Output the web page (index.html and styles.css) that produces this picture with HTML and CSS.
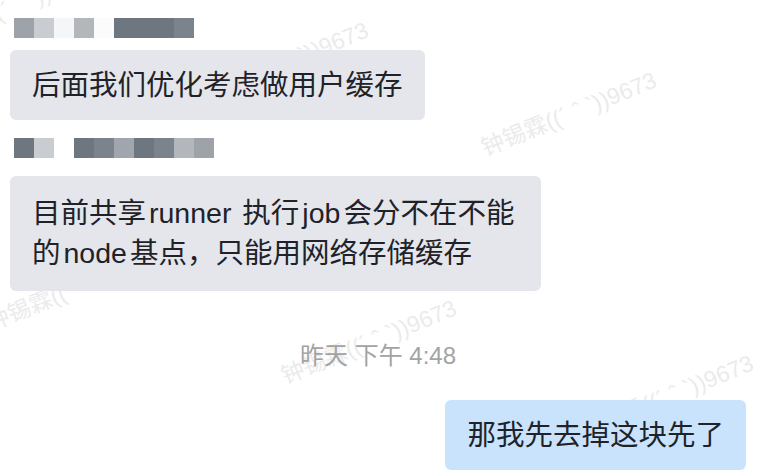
FILE: index.html
```html
<!DOCTYPE html>
<html lang="zh-CN">
<head>
  <meta charset="UTF-8">
  <meta name="viewport" content="width=device-width, initial-scale=1.0">
  <title>聊天记录</title>
  <link rel="stylesheet" href="styles.css">
</head>
<body>
  <div id="chat">
    <!-- 水印层 -->
    <div class="watermarks">
      <span class="wm" style="left: 10px; top: 6px;">钟锡霖((´ ˆ `))9673</span>
      <span class="wm" style="left: 280px; top: 62px;">钟锡霖((´ ˆ `))9673</span>
      <span class="wm" style="left: 568px; top: 112px;">钟锡霖((´ ˆ `))9673</span>
      <span class="wm" style="left: 862px; top: 165px;">钟锡霖((´ ˆ `))9673</span>
      <span class="wm" style="left: 73px; top: 287px;">钟锡霖((´ ˆ `))9673</span>
      <span class="wm" style="left: 368px; top: 340px;">钟锡霖((´ ˆ `))9673</span>
      <span class="wm" style="left: 665px; top: 395px;">钟锡霖((´ ˆ `))9673</span>
    </div>

    <div class="thread">
      <div class="sender">
        <i class="px c2"></i><i class="px c5"></i><i class="px c7"></i><i class="px c4"></i><i class="px c8"></i>
        <i class="px c1"></i><i class="px c1"></i><i class="px c1"></i><i class="px c3"></i>
      </div>
      <div class="bubble">后面我们优化考虑做用户缓存</div>

      <div class="sender sender-next">
        <i class="px c1"></i><i class="px c5"></i><i class="px blank"></i>
        <i class="px c1"></i><i class="px c3"></i><i class="px c6"></i><i class="px c1"></i><i class="px c3"></i><i class="px c4"></i><i class="px c2"></i>
      </div>
      <div class="bubble bubble-multi">目前共享<span class="latin">runner</span> 执行<span class="latin">job</span>会分不在不能的<span class="latin">node</span>基点，只能用网络存储缓存</div>

      <div class="time">昨天 下午 4:48</div>

      <div class="bubble bubble-self">那我先去掉这块先了</div>
    </div>
  </div>
</body>
</html>
```

FILE: styles.css
```css
body {
  margin: 0;
  padding: 0;
  background-color: #ffffff;
  font-family: "Liberation Sans", "Noto Sans CJK SC", sans-serif;
}

#chat {
  position: relative;
  width: 774px;
  height: 476px;
  overflow: hidden;
}

.watermarks {
  position: absolute;
  top: 0;
  left: 0;
  width: 100%;
  height: 100%;
}

.wm {
  position: absolute;
  transform: translate(-50%, -50%) rotate(-22deg);
  font-size: 23px;
  color: #ebebeb;
  white-space: nowrap;
  user-select: none;
}

.thread {
  position: relative;
  display: flex;
  flex-direction: column;
  padding: 18px 28px 0 10px;
}

/* 打码的发送人名字 */
.sender {
  display: flex;
  margin-left: 4px;
  height: 20px;
}

.sender-next {
  margin-top: 18px;
}

.px {
  width: 20px;
  height: 20px;
}

.c1 { background-color: #6e7680; }
.c2 { background-color: #9ea3a9; }
.c3 { background-color: #7b838c; }
.c4 { background-color: #b3b7bc; }
.c5 { background-color: #c9cdd1; }
.c6 { background-color: #a1a6ad; }
.c7 { background-color: #f5f6f7; }
.c8 { background-color: #fbfbfb; }
.blank { background-color: transparent; }

.bubble {
  align-self: flex-start;
  max-width: 531px;
  box-sizing: border-box;
  margin-top: 12px;
  padding: 15px 22px;
  border-radius: 6px;
  background-color: #e4e6eb;
  color: #1f2329;
  font-size: 28.5px;
  line-height: 40px;
}

.bubble-multi {
  margin-top: 18px;
  padding: 17px 22px 18px;
}

.latin {
  margin: 0 3px;
}

.bubble-self {
  align-self: flex-end;
  margin-top: 28px;
  background-color: #c9e3fd;
}

.time {
  margin-top: 49px;
  text-align: center;
  font-size: 24px;
  line-height: 32px;
  color: #a3a3a3;
}
```
